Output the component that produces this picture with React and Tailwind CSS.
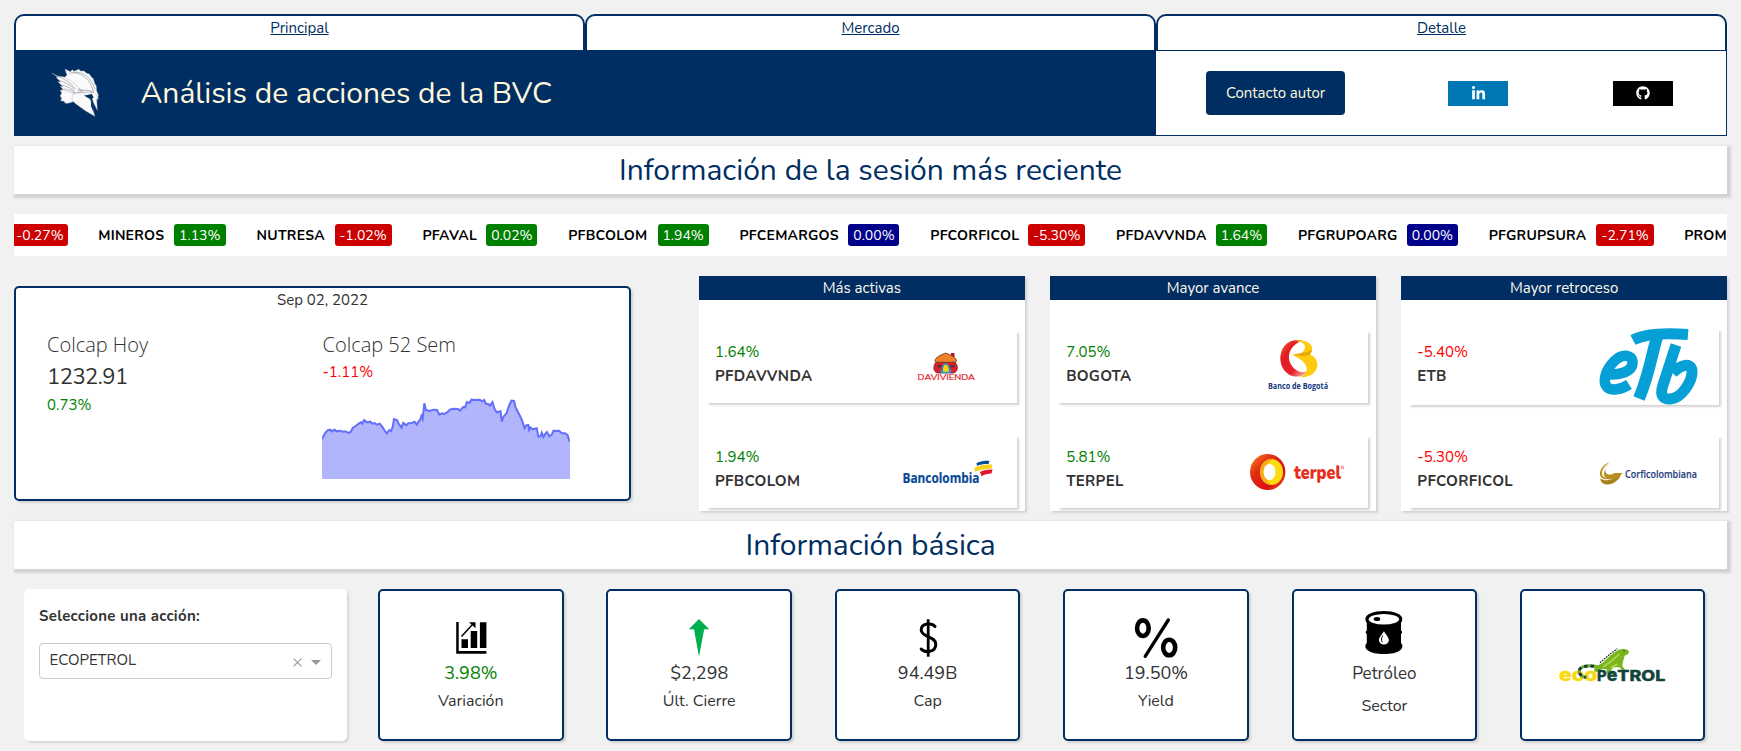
import React from 'react';
import { FaGithub, FaLinkedinIn } from 'react-icons/fa';

const TABS = ['Principal', 'Mercado', 'Detalle'];

const UP = 'bg-[#008000]';
const DOWN = 'bg-[#cc0000]';
const FLAT = 'bg-[#00008b]';

const TICKER = [
  { name: 'MINEROS', pct: '1.13%', bg: UP, nameW: 'w-[75.5px]', pctW: 'w-[52px]' },
  { name: 'NUTRESA', pct: '-1.02%', bg: DOWN, nameW: 'w-[78px]', pctW: 'w-[57px]' },
  { name: 'PFAVAL', pct: '0.02%', bg: UP, nameW: 'w-[64px]', pctW: 'w-[51px]' },
  { name: 'PFBCOLOM', pct: '1.94%', bg: UP, nameW: 'w-[89.5px]', pctW: 'w-[51px]' },
  { name: 'PFCEMARGOS', pct: '0.00%', bg: FLAT, nameW: 'w-[109px]', pctW: 'w-[51px]' },
  { name: 'PFCORFICOL', pct: '-5.30%', bg: DOWN, nameW: 'w-[98px]', pctW: 'w-[57px]' },
  { name: 'PFDAVVNDA', pct: '1.64%', bg: UP, nameW: 'w-[100px]', pctW: 'w-[51px]' },
  { name: 'PFGRUPOARG', pct: '0.00%', bg: FLAT, nameW: 'w-[109px]', pctW: 'w-[51px]' },
  { name: 'PFGRUPSURA', pct: '-2.71%', bg: DOWN, nameW: 'w-[107.5px]', pctW: 'w-[58px]' },
];

const COLCAP =
  '765,507 772,490 778,481 785,479 788,484 795,479 800,484 808,482 815,485 820,484 828,489 833,486 838,474 845,468 852,461 858,457 861,461 865,450 872,457 880,455 884,461 890,459 895,464 902,461 908,470 913,480 919,490 925,480 929,483 933,470 936,447 943,450 948,463 954,473 958,458 965,466 970,460 978,459 985,455 990,464 994,455 998,450 1001,438 1004,447 1008,400 1012,420 1020,423 1030,419 1038,420 1044,434 1050,430 1055,432 1062,427 1070,418 1078,416 1088,417 1093,422 1100,411 1105,412 1109,396 1115,399 1120,389 1130,390 1140,389 1145,394 1150,390 1155,402 1160,402 1164,407 1170,396 1174,415 1180,427 1189,424 1192,455 1196,440 1203,430 1210,405 1215,392 1221,393 1225,413 1232,430 1240,450 1246,475 1250,466 1255,465 1257,480 1260,472 1265,478 1275,475 1279,500 1284,499 1287,488 1291,501 1295,492 1299,486 1305,499 1311,493 1315,482 1320,483 1328,482 1335,490 1342,490 1348,495 1353,515';

function Helmet() {
  return (
    <svg viewBox="0 0 195 180" className="mb-[2px] ml-[31px] h-[60px] w-[65px]">
      <g fill="#fafafa" stroke="#a3aab6" strokeWidth="1.200" strokeLinejoin="round">
        <path d="M60 21l16 8 6-6 5 5 14-6 6 5 10 0 8 7 8 2 6 9 6 5 4 14 5 8 1 15 5 12-2 14-14-8-34-2-60-40 4-14 12-9z" />
        <path d="M46 84l4 10-5 8 5 6-3 8 10 2 4 6 8 0 16-5 8-16-12-20z" />
        <path d="M82 96l30-8 22 22 6 12 9 41-30-18-30-22-8-10z" />
        <path d="M21 33l16 9 20 3 28 16 20 20 1 12-32-2-18-6-10-12 8 1-15-15 8 0-14-13 6 0z" />
        <path d="M140 86l14 12 6 12-5-2 2 37-10-20-10-26z" />
      </g>
      <path d="M116 101l24-5 6 10-5 5-12-3-8-5z" fill="#002e62" />
      <path d="M138 112l7 26 1 14-8-20z" fill="#002e62" />
      <g fill="none" stroke="#8a909c" strokeWidth="1.800">
        <path d="M72 34c32-8 64 14 74 56M84 31c30-4 54 16 66 50" />
        <path d="M32 41c24 8 44 20 60 40M42 55c20 6 34 14 46 27M46 68c16 4 28 8 40 18M56 80l32 9" />
        <path d="M98 86c16 2 26-8 48 6M96 92c18 2 26-6 44 0M98 80l18 6" />
      </g>
    </svg>
  );
}

function Davivienda() {
  return (
    <svg viewBox="0 0 100 72" className="h-[72px] w-[100px]">
      <g transform="translate(17.5 0)">
        <rect x="36.500" y="22" width="3.500" height="5" fill="#c8102e" />
        <path d="M22 30.500c-4 4-3.500 10.500 1 11.500h16c5-1 5-8 1-11.500z" fill="#e31b2e" stroke="#5a2a20" strokeWidth=".7" />
        <path d="M20.500 30c0-4 6-6 10.500-8 5 2 11 4 11 8l-1 1.300H21.500z" fill="#f0812a" stroke="#5a3a20" strokeWidth=".8" />
        <path d="M27.800 41.500c0-7 1-8.500 3.200-8.500s4 1.500 4 8.500z" fill="#ffd400" stroke="#1f9fd0" strokeWidth="1.300" />
        <rect x="23" y="34" width="4" height="2.600" rx="1" fill="#31404a" />
        <rect x="36" y="34" width="4" height="2.600" rx="1" fill="#31404a" />
        <path d="M25.500 38.500l1.500 3M37 38.500l-1.500 3" stroke="#1f9fd0" strokeWidth="1.200" />
      </g>
      <text x="20.500" y="49.300" textLength="57.500" lengthAdjust="spacingAndGlyphs" className="fill-[#e31b2e] stroke-[#e31b2e] stroke-[0.2px] font-['Nunito','Open_Sans',sans-serif] text-[7.5px]">
        DAVIVIENDA
      </text>
    </svg>
  );
}

function Bancolombia() {
  return (
    <svg viewBox="0 0 100 72" className="h-[72px] w-[100px]">
      <text x="5.500" y="46.800" textLength="77" lengthAdjust="spacingAndGlyphs" className="fill-[#0a4a96] stroke-[#0a4a96] stroke-[0.2px] font-['Open_Sans',sans-serif] text-[14px] font-bold">
        Bancolombia
      </text>
      <path d="M79.500 27c4-2 9-2.500 13-2.300l-1 3.300c-4-.2-8 .4-11.500 1.700z" fill="#0a4a96" />
      <path d="M77 32c6-3 12-4 18.300-3.500l-.6 4.300c-6-.2-11.500.9-16.500 3z" fill="#fcd116" />
      <path d="M83 36c4-2 8-2.600 12.500-2.500l-1 4c-3.500 0-7 1-10 2.800z" fill="#e4172f" />
    </svg>
  );
}

function BancoDeBogota() {
  return (
    <svg viewBox="0 0 100 72" className="h-[72px] w-[100px] overflow-visible">
      <defs>
        <linearGradient id="bogotaRed" x1="0" y1="0" x2="1" y2="1">
          <stop offset="0" stopColor="#f26a21" />
          <stop offset=".3" stopColor="#e31b23" />
          <stop offset=".65" stopColor="#e8202a" />
          <stop offset="1" stopColor="#fbd5cc" />
        </linearGradient>
      </defs>
      <path d="M54 9.500C40 6.500 32 17 32.300 28 32.600 38 40 45.500 48 45.500c6 0 10-2 12-6-4 2-7.500 2-11 0C38.500 33 36.500 17 54 9.500z" fill="url(#bogotaRed)" />
      <path d="M46 10.200C54 7.500 65.500 11 64 19.500c-.3 1.800-1 3-2 4 5 2 7.300 6 7.300 10.500 0 7-7 12.700-17 12.200 5-2.500 7-6 6.300-9.700C57.700 32 53 28 44.500 24c7-.5 12-3 12.500-7.500.4-4-4-6.500-11-6.300z" fill="#ffcb0e" />
      <path d="M44 23.500c8-1 13-1.500 20-4.500-1 3-2 4.500-4 5.200-4 1-9 1-16-.7z" fill="#eda40c" />
      <text x="20" y="58" textLength="60" lengthAdjust="spacingAndGlyphs" className="fill-[#14397d] font-['Open_Sans',sans-serif] text-[8.5px] font-bold">
        Banco de Bogotá
      </text>
    </svg>
  );
}

function Terpel() {
  return (
    <svg viewBox="0 0 100 72" className="h-[72px] w-[100px] overflow-visible">
      <defs>
        <linearGradient id="terpelRing" x1="0" y1="0" x2="1" y2="1">
          <stop offset="0" stopColor="#f58a1f" />
          <stop offset=".35" stopColor="#e22a12" />
          <stop offset=".7" stopColor="#d80f12" />
          <stop offset="1" stopColor="#f0641e" />
        </linearGradient>
      </defs>
      <ellipse cx="19.700" cy="36" rx="17.700" ry="18" fill="url(#terpelRing)" />
      <ellipse cx="23.500" cy="36" rx="11.500" ry="13" fill="#ffdc12" />
      <path d="M12.500 33c2-8 8-11 14-10-5 1-9 5-9 13s3 11 7 13c-8 0-13-8-12-16z" fill="#f5a81c" />
      <ellipse cx="21.500" cy="36" rx="6" ry="8" fill="#fff" />
      <text x="46" y="42.600" textLength="47" lengthAdjust="spacingAndGlyphs" className="fill-[#e8301f] font-['Nunito','Open_Sans',sans-serif] text-[19.5px] font-black">
        terpel
      </text>
      <circle cx="94.500" cy="31.500" r="1.200" fill="none" stroke="#e8301f" strokeWidth=".7" />
    </svg>
  );
}

function Etb() {
  return (
    <svg viewBox="0 0 100 76" className="h-[76px] w-[100px] overflow-visible">
      <g fill="none" stroke="#069fd6" strokeLinecap="butt" strokeLinejoin="round" transform="translate(-0.500 -1)">
        <path d="M6 46c14 2 28.500-2 28-12-.3-8-11-8.500-18-1C6.500 42 4 54 8.500 59c4 4 13.500 3 22-2.500" strokeWidth="10.500" />
        <path d="M34.500 12c12-6.500 36-7 55-5.500" strokeWidth="11" />
        <path d="M59 8c-5 14-8 38-18.500 62.500" strokeWidth="12" />
        <path d="M77.500 17L64.500 57c-4 12 1.500 14.500 7.500 14C83.500 70 94 53 93.500 43c-.5-8.500-11-7-19.500 2" strokeWidth="11" />
      </g>
    </svg>
  );
}

function Corficolombiana() {
  return (
    <svg viewBox="0 0 100 72" className="h-[72px] w-[100px] overflow-visible">
      <path d="M11.500 25.500C3 29 0 35 1.200 39.500c1 3.500 5 4.300 9 3.300-4-.3-7-2-7.200-5.300C2.800 33 6.500 29 11.500 25.500z" fill="#b8901f" />
      <path d="M11.500 26.500C6.500 30 5 35 7.500 37.500c2 1.800 5 1.300 8-.5h8c-4 5.500-10 7.300-14.500 6.200-5.500-1.500-6-9.200 2.500-16.700z" fill="#b8901f" />
      <path d="M10 30c-2 3.500-1.500 6.500.5 7.200 1 .3 2.500 0 3.500-.7-4 .3-5-2.500-4-6.500z" fill="#fff" />
      <path d="M1 42.500c6 3.500 15 1.500 21-4-2.500 6.500-8.500 10.500-14.500 10C4 48.200 1.500 46 1 42.500z" fill="#a8821a" />
      <text x="26" y="42.300" textLength="72" lengthAdjust="spacingAndGlyphs" className="fill-[#1f3f7f] stroke-[#1f3f7f] stroke-[0.15px] font-['Open_Sans',sans-serif] text-[11px] font-semibold">
        Corficolombiana
      </text>
    </svg>
  );
}

function Ecopetrol() {
  return (
    <svg viewBox="0 0 375 150" className="h-[50px] w-[125px]">
      <g className="fill-[#f7d90c] stroke-[#f7d90c] stroke-1 font-['Inter',sans-serif] font-extrabold">
        <text x="27" y="122" textLength="115" lengthAdjust="spacingAndGlyphs" className="text-[54px]">eco</text>
      </g>
      <path d="M150 84c-24-10-54-8-61 4-5 10 4 22 18 24" fill="none" stroke="#6fa83a" strokeWidth="9" strokeLinecap="round" />
      <path d="M150 84c-24-10-54-8-61 4-5 10 4 22 18 24" fill="none" stroke="#1d3b34" strokeWidth="9" strokeDasharray="10 9" />
      <path d="M134 82l24-14 24-22 22-16 16-4 12 3 5 5-2 8-11 5-5 18-2 14 12 15-5 3-16-15-18 0-10 14 16 4-4 4-22-4 0-12-14-2-14 10-10-2z" fill="#7ab51d" />
      <path d="M150 68l28-24 24-18" fill="none" stroke="#1d3b34" strokeWidth="4" strokeDasharray="5 3" />
      <path d="M160 80l26-18 22-20M182 84l20-12" fill="none" stroke="#b5d65a" strokeWidth="5" />
      <circle cx="222" cy="33" r="2" fill="#1d3b34" />
      <g className="fill-[#12443a] stroke-[#12443a] stroke-1 font-['Inter',sans-serif] font-extrabold">
        <text x="141" y="122" textLength="29" lengthAdjust="spacingAndGlyphs" className="text-[42px]">P</text>
        <text x="170" y="122" textLength="32" lengthAdjust="spacingAndGlyphs" className="text-[54px]">e</text>
        <text x="202" y="122" textLength="144" lengthAdjust="spacingAndGlyphs" className="text-[42px]">TROL</text>
      </g>
    </svg>
  );
}

const ICON = 'h-12 w-12 overflow-visible';

const ChartIcon = () => (
  <svg viewBox="0 0 48 48" className={ICON}>
    <path d="M9.200 10h2.500v29h27.700v2.700H9.200zM14.500 27.300h6.500V36h-6.500zM23.700 19h6.500v17h-6.500zM32.900 10.300h6.500V36h-6.500z" />
    <path d="M14.500 24.500L25.500 12.500" stroke="#000" strokeWidth="1.500" />
    <path d="M22 10.300h6.500v6z" />
  </svg>
);
const ArrowIcon = () => (
  <svg viewBox="0 0 48 48" className={ICON}>
    <path d="M24 7l10.200 10.300h-5L24 44.700l-5-27.400h-5.200z" fill="#00b050" />
  </svg>
);
const DollarIcon = () => (
  <svg viewBox="0 0 48 48" className={ICON}>
    <path d="M31 14.500C28 10.500 17 10.800 17.200 18.200c.2 7 14.600 6 14.600 14 0 8.300-11 9-14.600 4.800" fill="none" stroke="#000" strokeWidth="3" strokeLinecap="round" />
    <path d="M24.200 7.300v37.400" stroke="#000" strokeWidth="2.800" />
  </svg>
);
const PercentIcon = () => (
  <svg viewBox="0 0 48 48" className={ICON}>
    <g fill="none" stroke="#000">
      <ellipse cx="10.900" cy="16.200" rx="5.800" ry="7.800" strokeWidth="4.600" />
      <ellipse cx="37.200" cy="35.500" rx="6" ry="7.800" strokeWidth="4.600" />
      <path d="M36.300 8L13.200 44.300" strokeWidth="3.300" strokeLinecap="round" />
    </g>
  </svg>
);
const BarrelIcon = () => (
  <svg viewBox="0 0 48 48" className={ICON}>
    <path d="M23.900-1C34-1 42.300 2 42.300 7c0 2-1 3-1.300 4v7.500c1.500.8 1.500 2.800 0 3.600V31c2 2 2 5-.6 7C37 41 31 42 23.900 42S11 41 7.400 38c-2.600-2-2.600-5-.6-7v-8.900c-1.500-.8-1.500-2.800 0-3.600V11C6.400 10 5.400 9 5.400 7c0-5 8.300-8 18.500-8z" />
    <ellipse cx="23.900" cy="7.300" rx="15.200" ry="5.200" fill="#fff" />
    <ellipse cx="17" cy="7" rx="3.300" ry="2" />
    <path d="M23.900 19.300c2.500 4 5 6 5 9a5 4.200 0 0 1-10 0c0-3 2.500-5 5-9z" fill="#fff" />
    <path d="M22.800 23.500c-1.500 2.500-1.800 4.500-.6 6.800" fill="none" stroke="#000" strokeWidth="1" />
  </svg>
);

const GROUPS = [
  {
    title: 'Más activas',
    items: [
      { pct: '1.64%', name: 'PFDAVVNDA', Logo: Davivienda },
      { pct: '1.94%', name: 'PFBCOLOM', Logo: Bancolombia },
    ],
  },
  {
    title: 'Mayor avance',
    items: [
      { pct: '7.05%', name: 'BOGOTA', Logo: BancoDeBogota },
      { pct: '5.81%', name: 'TERPEL', Logo: Terpel },
    ],
  },
  {
    title: 'Mayor retroceso',
    items: [
      { pct: '-5.40%', name: 'ETB', Logo: Etb, tall: true },
      { pct: '-5.30%', name: 'PFCORFICOL', Logo: Corficolombiana },
    ],
  },
];

const STATS = [
  { Icon: ChartIcon, value: '3.98%', label: 'Variación', valueClass: 'text-[18px] text-[#008000]', labelClass: 'mt-[3px]' },
  { Icon: ArrowIcon, value: '$2,298', label: 'Últ. Cierre', valueClass: 'text-[18px]', labelClass: 'mt-[3px]' },
  { Icon: DollarIcon, value: '94.49B', label: 'Cap', valueClass: 'text-[18px]', labelClass: 'mt-[3px]' },
  { Icon: PercentIcon, value: '19.50%', label: 'Yield', valueClass: 'text-[18px]', labelClass: 'mt-[3px]' },
  { Icon: BarrelIcon, value: 'Petróleo', label: 'Sector', valueClass: 'pt-px text-[17px]', labelClass: 'mt-[7px]' },
];

function Banner({ children, className }) {
  return (
    <h2 className={`flex h-12 items-center justify-center bg-white pt-[2px] text-[30px] leading-none text-[#002e62] shadow-[2px_2px_2px_2px_#d3d3d3] ${className}`}>
      {children}
    </h2>
  );
}

function StockItem({ pct, name, Logo, tall }) {
  return (
    <div className={`flex justify-between bg-white pl-[8px] pr-[19.5px] shadow-[2px_2px_2px_#d3d3d3] ${tall ? '-mt-[2px] h-[76px]' : 'h-[72px]'}`}>
      <div className={tall ? 'pt-[11px]' : 'pt-[9px]'}>
        <p className={`h-6 text-[15px] leading-6 ${pct.startsWith('-') ? 'text-[#ff0000]' : 'text-[#008000]'}`}>{pct}</p>
        <p className="h-6 text-[15px] font-bold leading-6 tracking-[0.3px]">{name}</p>
      </div>
      <Logo />
    </div>
  );
}

export default function App() {
  return (
    <div className="min-h-[751px] overflow-hidden bg-[#f1f1f1] px-[14px] pt-[14px] font-['Nunito','Open_Sans',sans-serif] text-[15px] text-[#323232]">
      <nav className="grid grid-cols-3">
        {TABS.map((t) => (
          <div key={t} className="h-9 rounded-t-[10px] border-2 border-b-0 border-[#002e62] bg-white text-center leading-6">
            <a href="#" className="text-[#002e62] underline">{t}</a>
          </div>
        ))}
      </nav>

      <header className="grid h-[86px] grid-cols-3 bg-[#002e62]">
        <div className="col-span-2 flex items-center">
          <Helmet />
          <h1 className="ml-[30.5px] pt-[2px] text-[30px] leading-none text-[#fff8dc]">Análisis de acciones de la BVC</h1>
        </div>
        <div className="flex items-center border border-l-0 border-[#002e62] bg-white pl-[50px]">
          <button className="h-11 w-[139px] rounded bg-[#002e62] text-[#fff8dc]">Contacto autor</button>
          <a href="#" className="ml-[103px] flex h-[25px] w-[60px] items-center justify-center bg-[#0077b5] text-[15px] text-white">
            <FaLinkedinIn />
          </a>
          <a href="#" className="ml-[105px] flex h-[25px] w-[60px] items-center justify-center bg-black text-[14px] text-white">
            <FaGithub />
          </a>
        </div>
      </header>

      <Banner className="mt-[10px]">Información de la sesión más reciente</Banner>

      <div className="mt-5 flex h-[42px] items-center gap-[30.8px] overflow-hidden bg-white text-[14px] leading-[22px]">
        <span className="-ml-[4px] h-[22px] w-[58px] shrink-0 rounded-[3px] bg-[#cc0000] pl-[2px] pt-px text-center leading-[21px] text-white">-0.27%</span>
        {TICKER.map((t, i) => (
          <div key={t.name} className={`flex h-[22px] shrink-0 ${i === 0 ? '-ml-[0.5px]' : ''}`}>
            <span className={`pt-px font-bold leading-[21px] tracking-[0.25px] text-black ${t.nameW}`}>{t.name}</span>
            <span className={`rounded-[3px] pt-px text-center leading-[21px] text-white ${t.bg} ${t.pctW}`}>{t.pct}</span>
          </div>
        ))}
        <span className="-ml-[0.8px] shrink-0 pt-px font-bold leading-[21px] tracking-[0.25px] text-black">PROM</span>
      </div>

      <section className="mt-5 flex">
        <div className="mt-[10px] h-[215px] w-[617px] rounded-[5px] border-2 border-[#002e62] bg-white shadow-[2px_2px_2px_#d3d3d3]">
          <p className="text-center leading-6">Sep 02, 2022</p>
          <div className="mt-[18px] flex pl-[31px]">
            <div className="w-[275.5px]">
              <h3 className="h-[30px] font-['Open_Sans',sans-serif] text-[20px] font-light leading-[30px]">Colcap Hoy</h3>
              <p className="mt-[2px] text-[22px] leading-[30px] tracking-[-0.5px]">1232.91</p>
              <p className="mt-px leading-6 text-[#008000]">0.73%</p>
            </div>
            <div>
              <h3 className="h-[30px] font-['Open_Sans',sans-serif] text-[20px] font-light leading-[30px]">Colcap 52 Sem</h3>
              <p className="leading-6 text-[#ff0000]">-1.11%</p>
              <svg viewBox="765 381 589 246" preserveAspectRatio="none" className="-ml-[0.5px] mt-[13px] h-[82px] w-[248px]">
                <polygon points={`765,627 ${COLCAP} 1354,515 1354,627`} fill="#b1b6fc" />
                <polyline points={COLCAP} fill="none" stroke="#636efa" strokeWidth="2" vectorEffect="non-scaling-stroke" />
              </svg>
            </div>
          </div>
        </div>
        <div className="ml-[68px] grid flex-1 grid-cols-3 gap-[25.5px]">
          {GROUPS.map((g) => (
            <div key={g.title} className="h-[235px] bg-white shadow-[2px_2px_2px_#d3d3d3]">
              <h4 className="h-6 bg-[#002e62] text-center leading-6 text-[#fff8ec]">{g.title}</h4>
              <div className="flex h-[211px] flex-col justify-between pb-[3px] pl-2 pr-[8px] pt-[31px]">
                {g.items.map((s) => (
                  <StockItem key={s.name} {...s} />
                ))}
              </div>
            </div>
          ))}
        </div>
      </section>

      <Banner className="mt-[10px]">Información básica</Banner>

      <section className="ml-[10px] mt-5 flex h-[152px]">
        <div className="mr-[31px] w-[323px] rounded-[5px] bg-white px-[15px] pt-[15px] shadow-[2px_2px_2px_#d9d9d9]">
          <p className="font-bold leading-6 tracking-[0.28px]">Seleccione una acción:</p>
          <div className="mt-[15px] flex h-9 w-[293px] items-center rounded border border-[#ccc] pb-px pl-[9.5px] pr-[10.5px] text-[#333]">
            <span className="flex-1">ECOPETROL</span>
            <svg viewBox="0 0 8 8" className="mt-[3px] h-[9px] w-[9px]">
              <path d="M.5.500l7 7M7.500.500l-7 7" stroke="#999" strokeWidth="1" />
            </svg>
            <svg viewBox="0 0 10 5" className="ml-[9px] mt-[3px] h-[5px] w-[10px]">
              <path d="M0 0h10L5 5z" fill="#999" />
            </svg>
          </div>
        </div>
        <div className="flex gap-[42.8px]">
          {STATS.map(({ Icon, value, label, valueClass, labelClass }) => (
            <div key={label} className="flex w-[185.6px] flex-col items-center rounded-[5px] border-2 border-[#002e62] bg-white pt-[21px] shadow-[2px_2px_2px_#d3d3d3]">
              <Icon />
              <p className={`leading-[26px] ${valueClass}`}>{value}</p>
              <p className={`text-[16px] leading-6 ${labelClass}`}>{label}</p>
            </div>
          ))}
          <div className="flex w-[185px] items-center justify-center rounded-[5px] border-2 border-[#002e62] bg-white shadow-[2px_2px_2px_#d3d3d3]">
            <Ecopetrol />
          </div>
        </div>
      </section>
    </div>
  );
}
